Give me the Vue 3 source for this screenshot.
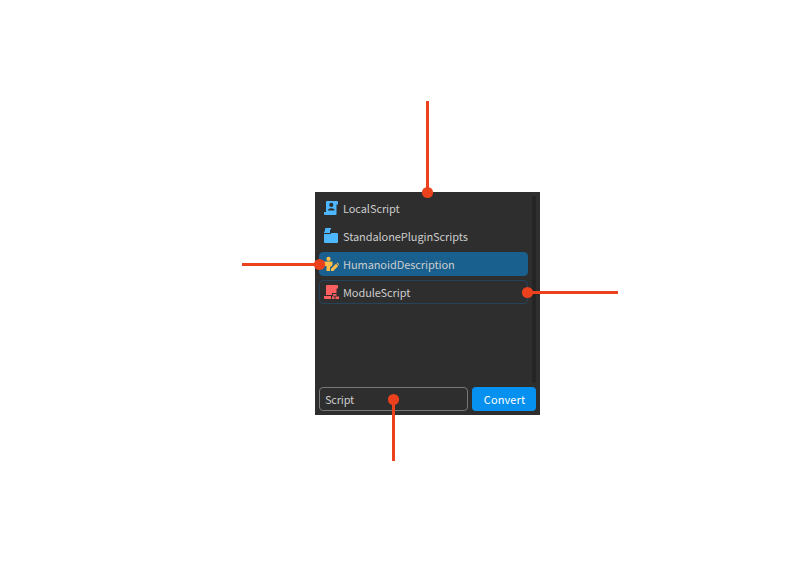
<script setup>
const rows = [
  { name: 'LocalScript', icon: 'local' },
  { name: 'StandalonePluginScripts', icon: 'folder' },
  { name: 'HumanoidDescription', icon: 'humanoid', state: 'selected' },
  { name: 'ModuleScript', icon: 'module', state: 'hovered' },
]
</script>

<template>
  <main class="stage">
    <section class="panel">
      <div class="browser">
        <ul class="list">
          <li v-for="row in rows" :key="row.name" class="row" :class="row.state">
            <svg class="icon" viewBox="0 0 16 16">
              <g v-if="row.icon === 'local'" fill="#4db8ff">
                <path fill-rule="evenodd" d="M4 1H14Q15 1 15 2V4.5H13.5V12H3V2Q3 1 4 1ZM8.3 2.8A2.1 2.1 0 1 0 8.3 7A2.1 2.1 0 1 0 8.3 2.8ZM5 10.6H11.6Q11.4 8.2 8.3 8.2Q5.2 8.2 5 10.6Z" />
                <path d="M1 12H13.5V14Q13.5 15 12.5 15H2Q1 15 1 14Z" />
              </g>
              <g v-else-if="row.icon === 'folder'" fill="#4db8ff">
                <path d="M3 0H8V1.5H7V5H1V3.5H2V1Q2 0 3 0Z" />
                <path d="M1 6H7.5L8.5 5H14Q15 5 15 6V14Q15 15 14 15H2Q1 15 1 14Z" />
              </g>
              <g v-else-if="row.icon === 'humanoid'" fill="#ffbd4a">
                <circle cx="5.5" cy="2.9" r="2.1" />
                <path d="M1 6.5Q1 5.5 2 5.5H8.5Q9.5 5.5 9.5 6.5V9L7 11.5V15H3.5V10H1Z" />
                <path d="M8 15V12.8L13 7.8L15.2 10L10.2 15ZM13.6 7.2L14.3 6.5L16 8.3L15.6 9.3Z" />
              </g>
              <g v-else fill="#ff5e60">
                <path d="M4 1H14Q15 1 15 2V4.5H13.5V9H9V11H3V2Q3 1 4 1Z" />
                <path d="M1 12H8V15H2Q1 15 1 14ZM9 12.5H11.5V15H9ZM12.5 12.5H16V15H12.5ZM10 10H13.5V11.8H10Z" />
              </g>
            </svg>
            <span>{{ row.name }}</span>
          </li>
        </ul>
        <div class="scrollbar"></div>
      </div>
      <footer class="controls">
        <div class="field">Script</div>
        <button class="convert">Convert</button>
      </footer>
    </section>
    <svg class="callouts" viewBox="0 0 797 561">
      <path d="M427.5 101V192M242 264.5H319M618 292.5H527M393.5 461V399" stroke="#eb411d" stroke-width="3" />
      <g fill="#eb411d">
        <circle cx="427.5" cy="192.5" r="5.6" />
        <circle cx="319.5" cy="264.5" r="5.6" />
        <circle cx="527.5" cy="292.5" r="5.6" />
        <circle cx="393.5" cy="399.5" r="5.6" />
      </g>
    </svg>
  </main>
</template>

<style>
body {
  margin: 0;
  background: #fff;
}
</style>

<style scoped>
.stage {
  box-sizing: border-box;
  position: relative;
  width: 797px;
  height: 561px;
  padding: 192px 0 0 315px;
  overflow: hidden;
  font: 11px/22px "Noto Sans CJK SC", "Noto Sans", sans-serif;
  color: #ccc;
}
.panel {
  box-sizing: border-box;
  width: 225px;
  height: 223px;
  padding: 4px;
  display: flex;
  flex-direction: column;
  gap: 4px;
  background: #2e2e2e;
}
.browser {
  flex: 1;
  display: flex;
  gap: 4px;
}
.list {
  flex: 1;
  display: flex;
  flex-direction: column;
  gap: 4px;
  margin: 0;
  padding: 0;
  list-style: none;
}
.row {
  box-sizing: border-box;
  height: 24px;
  display: flex;
  align-items: center;
  gap: 4px;
  padding: 0 3px;
  border: 1px solid transparent;
  border-radius: 4px;
  letter-spacing: -0.08px;
  white-space: nowrap;
}
.selected {
  background: #19608f;
  border-color: #19608f;
}
.hovered {
  border-color: #25435a;
}
.icon {
  width: 16px;
  height: 16px;
  flex: none;
}
.scrollbar {
  width: 4px;
  border-radius: 2px;
  background: #242424;
}
.controls {
  display: flex;
  gap: 4px;
}
.field {
  box-sizing: border-box;
  width: 149px;
  height: 24px;
  padding: 0 5px;
  border: 1px solid #777;
  border-radius: 4px;
  letter-spacing: -0.2px;
}
.convert {
  flex: 1;
  height: 24px;
  padding: 0 0 0 1px;
  border: 0;
  border-radius: 4px;
  background: #0690ef;
  color: #fff;
  font: inherit;
  letter-spacing: 0.1px;
}
.callouts {
  position: absolute;
  inset: 0;
  width: 797px;
  height: 561px;
  fill: none;
}
</style>
